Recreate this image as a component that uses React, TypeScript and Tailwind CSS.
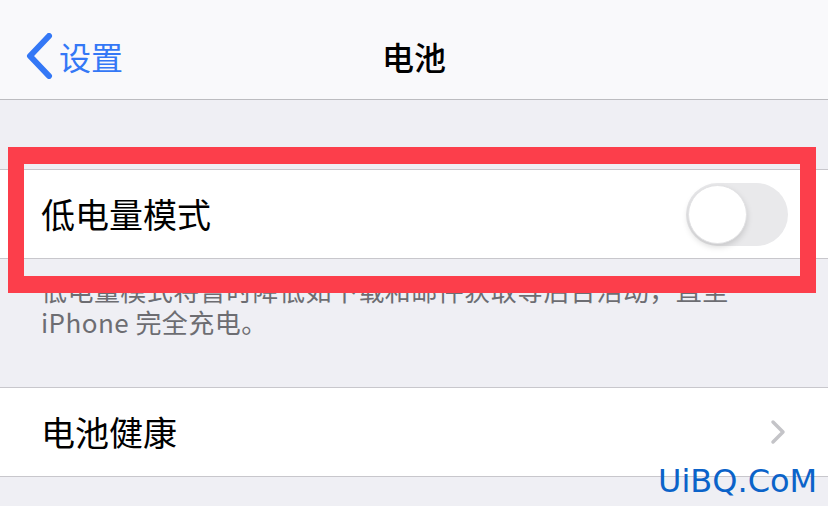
function Toggle() {
  return (
    <div className="relative w-[102px] h-[63px] rounded-full bg-[#e9e9eb] shrink-0">
      <div className="absolute left-[2px] top-[2px] w-[59px] h-[59px] rounded-full bg-white border border-[#e2e2e4] shadow-[0_3px_6px_rgba(0,0,0,0.15)]" />
    </div>
  );
}

function App() {
  return (
    <div className="relative w-[828px] h-[506px] overflow-hidden bg-[#efeff4] font-['Noto_Sans_CJK_SC',sans-serif]">
      {/* nav */}
      <div className="relative h-[100px] bg-[#f9f9fb] border-b border-[#bcbcc0] flex items-center pt-3">
        <div className="flex items-center pl-[24px]">
          <svg width="30" height="46" viewBox="0 0 30 46">
            <path d="M25 3 L6 23 L25 43" fill="none" stroke="#3478f6" strokeWidth="6" strokeLinecap="round" strokeLinejoin="round" />
          </svg>
          <span className="ml-[5px] text-[32px] leading-none text-[#3478f6]">设置</span>
        </div>
        <span className="absolute left-0 right-0 text-center text-[32px] leading-none font-medium text-black pointer-events-none">
          电池
        </span>
      </div>

      <div className="h-[69px]" />

      {/* low power row */}
      <div className="h-[90px] bg-white border-y border-[#c8c7cc] flex items-center justify-between pl-[41px] pr-[40px]">
        <span className="text-[34px] leading-none text-black">低电量模式</span>
        <Toggle />
      </div>

      <div className="pl-[41px] pr-[60px] pt-[15px] text-[26px] leading-[32px] tracking-[0.45px] text-[#6d6d72]">
        <p className="whitespace-nowrap">低电量模式将暂时降低如下载和邮件获取等后台活动，直至</p>
        <p>iPhone 完全充电。</p>
      </div>

      <div className="h-[49px]" />

      {/* battery health row */}
      <div className="h-[90px] bg-white border-y border-[#c8c7cc] flex items-center justify-between pl-[41px] pr-[42px]">
        <span className="text-[34px] leading-none text-black">电池健康</span>
        <svg width="16" height="26" viewBox="0 0 16 26">
          <path d="M3 3 L13 13 L3 23" fill="none" stroke="#c4c4c8" strokeWidth="3.5" strokeLinecap="round" strokeLinejoin="round" />
        </svg>
      </div>

      {/* highlight box */}
      <div className="absolute left-[8px] top-[147px] w-[808px] h-[146px] border-[16px] border-t-[17px] border-b-[17px] border-[#fc3e4b]" />

      {/* watermark */}
      <span className="absolute left-[658px] top-[465px] text-[32px] leading-none text-[#0b63c9] font-['DejaVu_Sans',sans-serif]">
        UiBQ.CoM
      </span>
    </div>
  );
}

export default App;
